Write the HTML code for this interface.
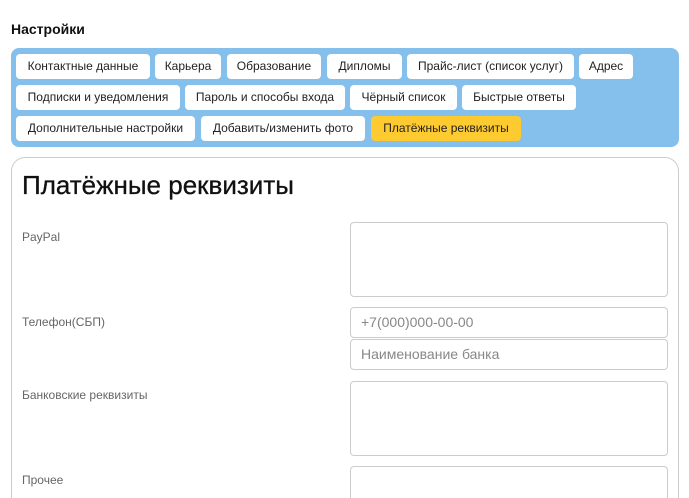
<!DOCTYPE html>
<html style="width:689px;height:498px;overflow:hidden"><head><meta charset="utf-8"><style>
*{box-sizing:border-box;margin:0;padding:0}
body{width:689px;height:498px;overflow:hidden;background:#fff;font-family:"Liberation Sans",sans-serif;position:relative}
.h{position:absolute;left:11px;top:21px;font-size:14px;font-weight:bold;color:#111}
.panel{position:absolute;left:11px;top:48px;width:668px;height:99px;background:#85bfec;border-radius:8px}
.b{position:absolute;height:25px;background:#fff;border-radius:4px;font-size:12px;color:#222;line-height:25px;text-align:center;white-space:nowrap}
.y{background:#fdca2f}
.card{position:absolute;left:11px;top:157px;width:668px;height:341px;border:1px solid #ccc;border-bottom:none;border-radius:14px 14px 0 0}
.t{position:absolute;left:22px;top:170px;font-size:26px;color:#111;-webkit-text-stroke:0.3px #111}
.l{position:absolute;left:22px;font-size:12px;color:#666}
.i{position:absolute;left:350px;width:318px;border:1px solid #ccc;border-radius:4px;font-size:14px;color:#888;padding-left:10px;line-height:29px}
</style></head><body>
<div class="h">Настройки</div>
<div class="panel"></div>
<div class="b" style="left:16px;top:54px;width:134px">Контактные данные</div>
<div class="b" style="left:155px;top:54px;width:66px">Карьера</div>
<div class="b" style="left:227px;top:54px;width:94px">Образование</div>
<div class="b" style="left:327px;top:54px;width:75px">Дипломы</div>
<div class="b" style="left:407px;top:54px;width:167px">Прайс-лист (список услуг)</div>
<div class="b" style="left:579px;top:54px;width:54px">Адрес</div>
<div class="b" style="left:16px;top:85px;width:164px">Подписки и уведомления</div>
<div class="b" style="left:185px;top:85px;width:160px">Пароль и способы входа</div>
<div class="b" style="left:350px;top:85px;width:107px">Чёрный список</div>
<div class="b" style="left:462px;top:85px;width:114px">Быстрые ответы</div>
<div class="b" style="left:16px;top:116px;width:179px">Дополнительные настройки</div>
<div class="b" style="left:201px;top:116px;width:164px">Добавить/изменить фото</div>
<div class="b y" style="left:371px;top:116px;width:150px">Платёжные реквизиты</div>
<div class="card"></div>
<div class="t">Платёжные реквизиты</div>
<div class="l" style="top:230px">PayPal</div>
<div class="i" style="top:222px;height:75px"></div>
<div class="l" style="top:315px">Телефон(СБП)</div>
<div class="i" style="top:307px;height:31px">+7(000)000-00-00</div>
<div class="i" style="top:339px;height:31px">Наименование банка</div>
<div class="l" style="top:388px">Банковские реквизиты</div>
<div class="i" style="top:381px;height:75px"></div>
<div class="l" style="top:473px">Прочее</div>
<div class="i" style="top:466px;height:32px;border-bottom:none;border-radius:4px 4px 0 0"></div>
</body></html>
